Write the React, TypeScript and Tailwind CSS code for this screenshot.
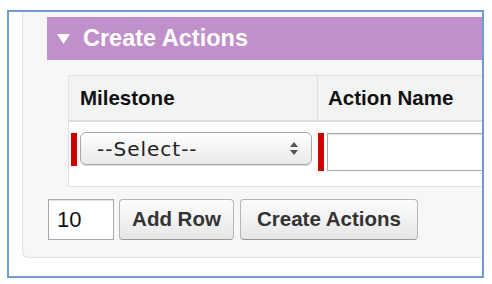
function SelectArrows() {
  return (
    <svg width="8" height="13" viewBox="0 0 8 13" className="shrink-0">
      <polygon points="4,0 8,5 0,5" fill="#555" />
      <polygon points="0,8 8,8 4,13" fill="#555" />
    </svg>
  )
}

export default function App() {
  return (
    <div className="h-[284px] w-[492px] bg-white pl-[7px] pt-[10px] font-['Liberation_Sans',Arial,sans-serif]">
      <div className="flex h-[268px] w-[477px] overflow-hidden border-2 border-[#6d9dd4] pb-[18px] pl-[13px]">
        <div className="flex min-w-[600px] flex-col rounded-bl-[6px] border-b border-l border-[#e3e3e3] bg-[#f7f7f7] pl-[24px] pt-[5px]">
          <div className="flex h-[43px] items-center gap-[13px] bg-[#bf90c9] pl-[10px] text-[23.5px] font-bold text-white">
            <svg width="13" height="10" viewBox="0 0 13 10">
              <polygon points="0,0 13,0 6.5,10" fill="#fff" />
            </svg>
            <span className="leading-none">Create Actions</span>
          </div>

          <div className="ml-[21px] mt-[15px] border border-[#e0e0e0] bg-white">
            <div className="flex h-[46px] border-b-2 border-[#dedede] bg-[#f2f3f3] text-[20.5px] font-bold text-[#111]">
              <div className="flex w-[249px] items-center border-r border-[#e0e0e0] pl-[11px]">Milestone</div>
              <div className="flex items-center pl-[10px]">Action Name</div>
            </div>
            <div className="flex h-[64px] items-start pl-[2px] pt-[10px]">
              <div className="mt-[1px] h-[33px] w-[6px] bg-[#cc0000]" />
              <div className="ml-[3px] flex h-[33px] w-[232px] items-center justify-between rounded-[6px] border border-[#a8a8a8] bg-gradient-to-b from-white to-[#e9e9e9] pl-[16px] pr-[13px] font-['DejaVu_Sans',sans-serif] text-[20px] text-[#222] shadow-[0_1px_1px_rgba(0,0,0,0.15)]">
                <span className="tracking-[1px]">--Select--</span>
                <SelectArrows />
              </div>
              <div className="ml-[6px] mt-[1px] h-[38px] w-[6px] bg-[#cc0000]" />
              <div className="ml-[3px] mt-[1px] h-[38px] w-[200px] border border-[#a8a8a8] bg-white shadow-[inset_0_1px_1px_rgba(0,0,0,0.12)]" />
            </div>
          </div>

          <div className="ml-[1px] mt-[12px] flex items-start gap-[5px]">
            <div className="flex h-[41px] w-[66px] items-center border border-[#a8a8a8] bg-white pl-[8px] text-[22px] text-[#111] shadow-[inset_0_1px_1px_rgba(0,0,0,0.12)]">
              10
            </div>
            <button className="h-[41px] w-[115px] rounded-[4px] border border-[#b5b5b5] border-b-[#999] bg-gradient-to-b from-[#fdfdfd] to-[#e6e6e6] text-[20.5px] font-bold text-[#333]">
              Add Row
            </button>
            <button className="ml-[1px] h-[41px] w-[178px] rounded-[4px] border border-[#b5b5b5] border-b-[#999] bg-gradient-to-b from-[#fdfdfd] to-[#e6e6e6] text-[20.5px] font-bold text-[#333]">
              Create Actions
            </button>
          </div>
        </div>
      </div>
    </div>
  )
}
